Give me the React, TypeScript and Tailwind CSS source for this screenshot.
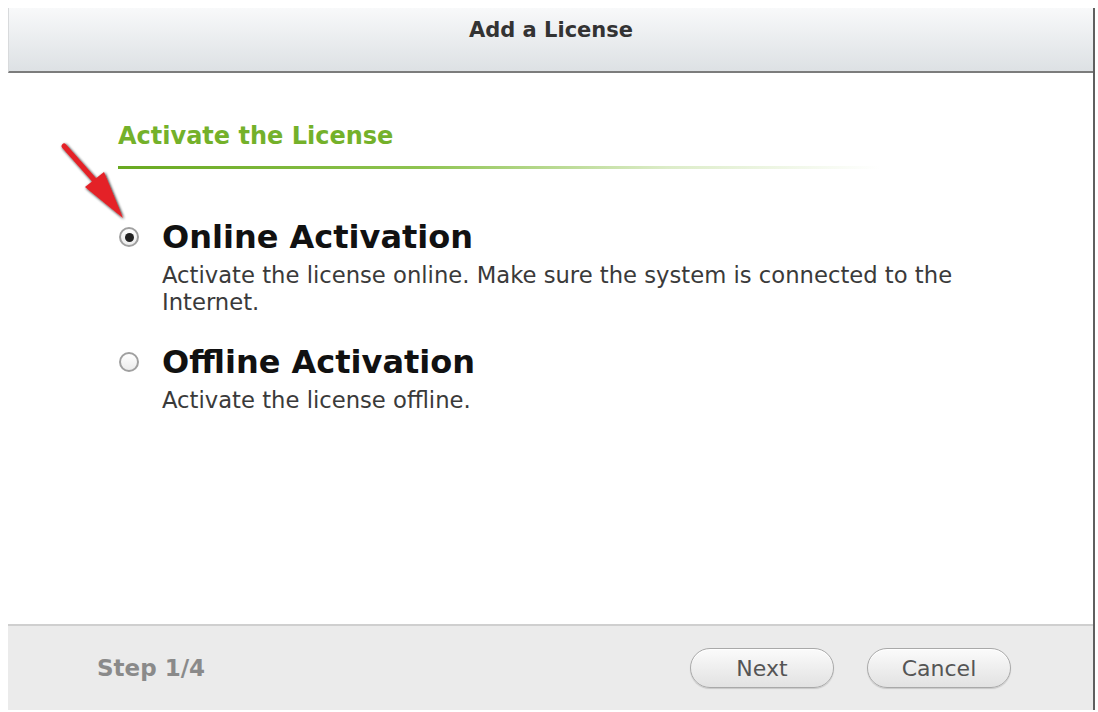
import { useState } from "react";

const FONT = { fontFamily: '"DejaVu Sans", Verdana, sans-serif' };

type Option = {
  id: string;
  title: string;
  description: string;
};

const OPTIONS: Option[] = [
  {
    id: "online",
    title: "Online Activation",
    description:
      "Activate the license online. Make sure the system is connected to the Internet.",
  },
  {
    id: "offline",
    title: "Offline Activation",
    description: "Activate the license offline.",
  },
];

function Radio({ checked }: { checked: boolean }) {
  return (
    <span className="flex h-[20px] w-[20px] shrink-0 items-center justify-center rounded-full border-2 border-[#a0a0a0] bg-gradient-to-b from-white to-[#ececec]">
      {checked && <span className="h-[9px] w-[9px] rounded-full bg-[#222]" />}
    </span>
  );
}

function PillButton({ label }: { label: string }) {
  return (
    <button className="h-[40px] w-[144px] rounded-full border border-[#a9a9a9] bg-gradient-to-b from-[#fbfbfb] to-[#e2e2e2] text-[22px] text-[#555] shadow-[inset_0_1px_0_#fff,0_1px_1px_rgba(0,0,0,0.15)]">
      {label}
    </button>
  );
}

export default function App() {
  const [selected, setSelected] = useState("online");

  return (
    <div className="relative h-[712px] w-full overflow-hidden bg-white pl-2 pt-2" style={FONT}>
      <div className="flex h-[702px] w-[1087px] flex-col border-r-2 border-[#5f5f5f]">
        {/* title bar */}
        <div className="flex h-[65px] items-center justify-center border-b-2 border-l border-[#7c7c7c] border-l-[#d8dadc] bg-gradient-to-b from-[#f8f9fa] to-[#dde1e4]">
          <span className="-mt-[18px] text-[21px] font-bold text-[#333]">Add a License</span>
        </div>

        {/* body */}
        <div className="flex flex-1 flex-col pl-[110px] pt-[48px]">
          <h2 className="text-[24px] font-bold leading-[30px] text-[#74b12a]">
            Activate the License
          </h2>
          <div className="mt-[15px] h-[3px] w-[762px] bg-[linear-gradient(to_right,#68a920,#8fc451_40%,#dcecc8_72%,transparent)]" />

          <div className="mt-[50px] flex flex-col gap-[28px]">
            {OPTIONS.map((option) => (
              <div
                key={option.id}
                className="flex cursor-pointer items-start"
                onClick={() => setSelected(option.id)}
              >
                <div className="ml-[1px] mt-[8px] w-[43px]">
                  <Radio checked={selected === option.id} />
                </div>
                <div className="w-[830px]">
                  <div className="text-[32px] font-bold leading-[36px] text-[#111]">
                    {option.title}
                  </div>
                  <p className="mt-[7px] text-[22.7px] leading-[27px] text-[#3a3a3a]">
                    {option.description}
                  </p>
                </div>
              </div>
            ))}
          </div>
        </div>

        {/* footer */}
        <div className="flex h-[86px] items-center border-t-2 border-[#cfcfcf] bg-[#ebebeb] pl-[89px] pr-[82px]">
          <span className="text-[23px] font-bold text-[#8a8a8a]">Step 1/4</span>
          <div className="ml-auto flex gap-[33px]">
            <PillButton label="Next" />
            <PillButton label="Cancel" />
          </div>
        </div>
      </div>

      {/* red pointer arrow */}
      <svg
        className="pointer-events-none absolute left-0 top-0"
        width="140"
        height="240"
        viewBox="0 0 140 240"
      >
        <defs>
          <filter id="arrowShadow" x="-30%" y="-30%" width="160%" height="160%">
            <feGaussianBlur in="SourceAlpha" stdDeviation="1.5" />
            <feOffset dx="1" dy="1" result="blur" />
            <feMerge>
              <feMergeNode in="blur" />
              <feMergeNode in="SourceGraphic" />
            </feMerge>
          </filter>
        </defs>
        <g filter="url(#arrowShadow)" opacity="0.95">
          <line x1="64" y1="146" x2="96" y2="182" stroke="#e3171d" strokeWidth="5" strokeLinecap="round" />
          <polygon points="85,187 104,172 123,218" fill="#e3171d" />
        </g>
      </svg>
    </div>
  );
}
